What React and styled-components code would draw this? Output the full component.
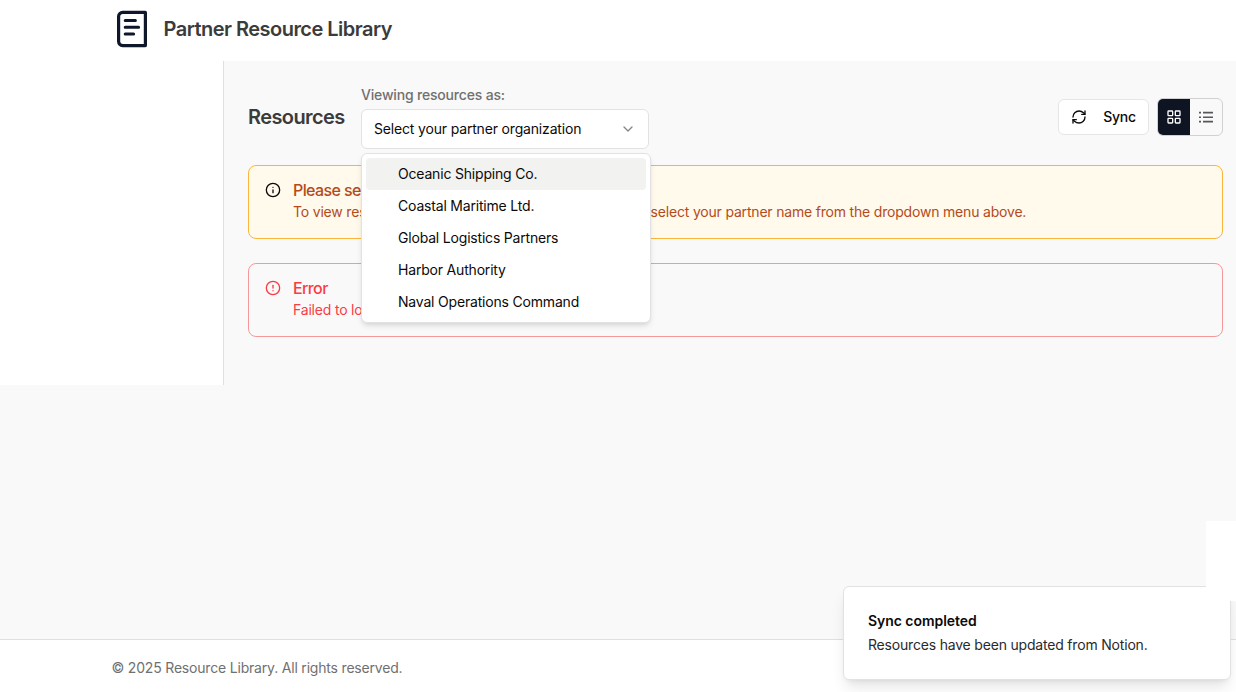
import React from "react";
import styled, { createGlobalStyle } from "styled-components";
import { RefreshCw, LayoutGrid, ChevronDown, Info, CircleAlert } from "lucide-react";

const GlobalStyle = createGlobalStyle`
  *, *::before, *::after { box-sizing: border-box; }
  body {
    margin: 0;
    background: #f9f9f9;
    color: #0c0a09;
    font-family: Inter, "Liberation Sans", sans-serif;
    font-size: 14px;
    line-height: 20px;
    letter-spacing: -0.19px;
    overflow: hidden;
    -webkit-font-smoothing: antialiased;
  }
  h1, h2, h3, p { margin: 0; }
  button { font: inherit; color: inherit; letter-spacing: inherit; cursor: pointer; }
`;

const Page = styled.div`
  position: relative;
  display: flex;
  flex-direction: column;
  height: 692px;
  overflow: hidden;
`;

const Header = styled.header`
  display: flex;
  align-items: center;
  gap: 15.5px;
  flex: none;
  height: 61px;
  padding: 0 112px 3px 116px;
  background: #fff;
`;

const Brand = styled.h1`
  font-size: 20px;
  line-height: 28px;
  font-weight: 600;
  letter-spacing: -0.52px;
  color: #3b3b3b;
`;

const Body = styled.div`
  display: flex;
  flex: none;
  height: 324px;
`;

const Sidebar = styled.aside`
  flex: none;
  width: 224px;
  background: #fff;
  border-right: 1px solid #e0e0e0;
`;

const Main = styled.main`
  flex: 1;
  min-width: 0;
  padding: 24px 13px 24px 24px;
`;

const Toolbar = styled.div`
  display: flex;
  align-items: center;
  justify-content: space-between;
  height: 64px;
  margin-bottom: 16px;
`;

const Group = styled.div`
  display: flex;
  align-items: center;
  gap: ${(p) => p.$gap}px;
`;

const Heading = styled.h2`
  width: 97px;
  font-size: 20px;
  line-height: 28px;
  font-weight: 600;
  letter-spacing: -0.6px;
  white-space: nowrap;
  color: #3b3b3b;
`;

const Field = styled.div`
  position: relative;
  display: flex;
  flex-direction: column;
  gap: 4px;
  width: 288px;
`;

const Label = styled.label`
  font-weight: 500;
  color: #707070;
  letter-spacing: -0.18px;
`;

const Trigger = styled.button`
  display: flex;
  align-items: center;
  justify-content: space-between;
  height: 40px;
  padding: 0 12px;
  background: #fff;
  border: 1px solid #e2e2e2;
  border-radius: 6px;
  letter-spacing: -0.17px;

  svg { color: #868686; }
`;

const Menu = styled.ul`
  position: absolute;
  z-index: 2;
  top: 68px;
  left: 0;
  width: 290px;
  margin: 0;
  padding: 4px;
  list-style: none;
  background: #fff;
  border: 1px solid #e2e2e2;
  border-radius: 6px;
  box-shadow: 0 4px 6px -1px rgba(0, 0, 0, 0.1), 0 2px 4px -2px rgba(0, 0, 0, 0.1);
`;

const Option = styled.li`
  padding: 6px 8px 6px 32px;
  border-radius: 4px;
  background: ${(p) => (p.$active ? "#f2f2f1" : "transparent")};
`;

const SyncButton = styled.button`
  display: flex;
  align-items: center;
  gap: 16px;
  height: 36px;
  padding: 0 12px;
  background: #fff;
  border: 1px solid #e6e6e6;
  border-radius: 6px;
  font-weight: 500;
`;

const Toggle = styled.div`
  display: flex;
  height: 38px;
  border: 1px solid #d1d1d1;
  border-radius: 6px;
  overflow: hidden;
`;

const ToggleButton = styled.button`
  display: flex;
  align-items: center;
  justify-content: center;
  width: 32px;
  padding: 0;
  border: 0;
  background: ${(p) => (p.$active ? "#0f1422" : "transparent")};
  color: ${(p) => (p.$active ? "#fff" : "#57575b")};
`;

const Alerts = styled.div`
  display: flex;
  flex-direction: column;
  gap: 24px;
`;

const tones = {
  warning: { bg: "#fffaeb", border: "#fbb53c", text: "#b44a1c", icon: "#0c0a09" },
  error: { bg: "transparent", border: "#f6989b", text: "#fb3b45", icon: "#fb3b45" },
};

const AlertBox = styled.div`
  display: flex;
  gap: 12px;
  height: 74px;
  padding: 16px;
  border: 1px solid ${(p) => tones[p.$tone].border};
  border-radius: 8px;
  background: ${(p) => tones[p.$tone].bg};
  color: ${(p) => tones[p.$tone].text};

  svg { flex: none; color: ${(p) => tones[p.$tone].icon}; }
`;

const AlertTitle = styled.h3`
  margin-bottom: 4px;
  font-size: 16px;
  line-height: 16px;
  font-weight: 500;
  letter-spacing: -0.6px;
`;

const Footer = styled.footer`
  display: flex;
  align-items: center;
  flex: none;
  height: 53px;
  margin-top: auto;
  padding: 4px 111.5px 0;
  background: #fff;
  border-top: 1px solid #e0e0e0;
  color: #707070;
`;

const Toast = styled.div`
  position: absolute;
  right: 5px;
  bottom: 12px;
  width: 388px;
  height: 94px;
  padding: 24px;
  display: flex;
  flex-direction: column;
  gap: 4px;
  background: #fff;
  border: 1px solid #e2e2e2;
  border-radius: 6px;
  box-shadow: 0 10px 15px -3px rgba(0, 0, 0, 0.1), 0 4px 6px -4px rgba(0, 0, 0, 0.1);
`;

const ToastTitle = styled.h3`
  font-size: 14px;
  line-height: 20px;
  font-weight: 600;
  letter-spacing: -0.05px;
`;

const ToastText = styled.p`
  color: #2b2a29;
`;

const CornerPanel = styled.div`
  position: absolute;
  right: 0;
  top: 521px;
  width: 30px;
  height: 80px;
  background: #fff;
`;

const partners = [
  "Oceanic Shipping Co.",
  "Coastal Maritime Ltd.",
  "Global Logistics Partners",
  "Harbor Authority",
  "Naval Operations Command",
];

function Logo() {
  return (
    <svg width="32" height="38" viewBox="0 0 32 38" fill="none" stroke="#0f172a" strokeLinecap="round" strokeLinejoin="round">
      <path strokeWidth="3.2" d="M6.6 2.4h22.8v33.2H6.6a4 4 0 0 1-4-4V6.4a4 4 0 0 1 4-4Z" />
      <path strokeWidth="3" d="M9.2 10.6H19.4M9.2 17.3H22.6M9.2 24H17.6" />
    </svg>
  );
}

function ListIcon() {
  return (
    <svg width="16" height="16" viewBox="0 0 16 16" fill="none" stroke="currentColor" strokeWidth="1.6">
      <path d="M5 3.6H15M5 8.2H15M5 12.6H15M1 3.6H3M1 8.2H3M1 12.6H3" />
    </svg>
  );
}

function Alert({ tone, icon: Icon, title, children }) {
  return (
    <AlertBox $tone={tone} role="alert">
      <Icon size={16} />
      <div>
        <AlertTitle>{title}</AlertTitle>
        <p>{children}</p>
      </div>
    </AlertBox>
  );
}

export default function App() {
  return (
    <Page>
      <GlobalStyle />
      <Header>
        <Logo />
        <Brand>Partner Resource Library</Brand>
      </Header>
      <Body>
        <Sidebar />
        <Main>
          <Toolbar>
            <Group $gap={16}>
              <Heading>Resources</Heading>
              <Field>
                <Label>Viewing resources as:</Label>
                <Trigger>
                  <span>Select your partner organization</span>
                  <ChevronDown size={16} />
                </Trigger>
                <Menu>
                  {partners.map((name, i) => (
                    <Option key={name} $active={i === 0}>{name}</Option>
                  ))}
                </Menu>
              </Field>
            </Group>
            <Group $gap={8}>
              <SyncButton>
                <RefreshCw size={16} />
                Sync
              </SyncButton>
              <Toggle>
                <ToggleButton $active aria-label="Grid view"><LayoutGrid size={16} /></ToggleButton>
                <ToggleButton aria-label="List view"><ListIcon /></ToggleButton>
              </Toggle>
            </Group>
          </Toolbar>
          <Alerts>
            <Alert tone="warning" icon={Info} title="Please select your organization">
              To view resources specific to your organization, please select your partner name from the dropdown menu above.
            </Alert>
            <Alert tone="error" icon={CircleAlert} title="Error">
              Failed to load resources. Please try again.
            </Alert>
          </Alerts>
        </Main>
      </Body>
      <Footer>© 2025 Resource Library. All rights reserved.</Footer>
      <Toast role="status">
        <ToastTitle>Sync completed</ToastTitle>
        <ToastText>Resources have been updated from Notion.</ToastText>
      </Toast>
      <CornerPanel />
    </Page>
  );
}
